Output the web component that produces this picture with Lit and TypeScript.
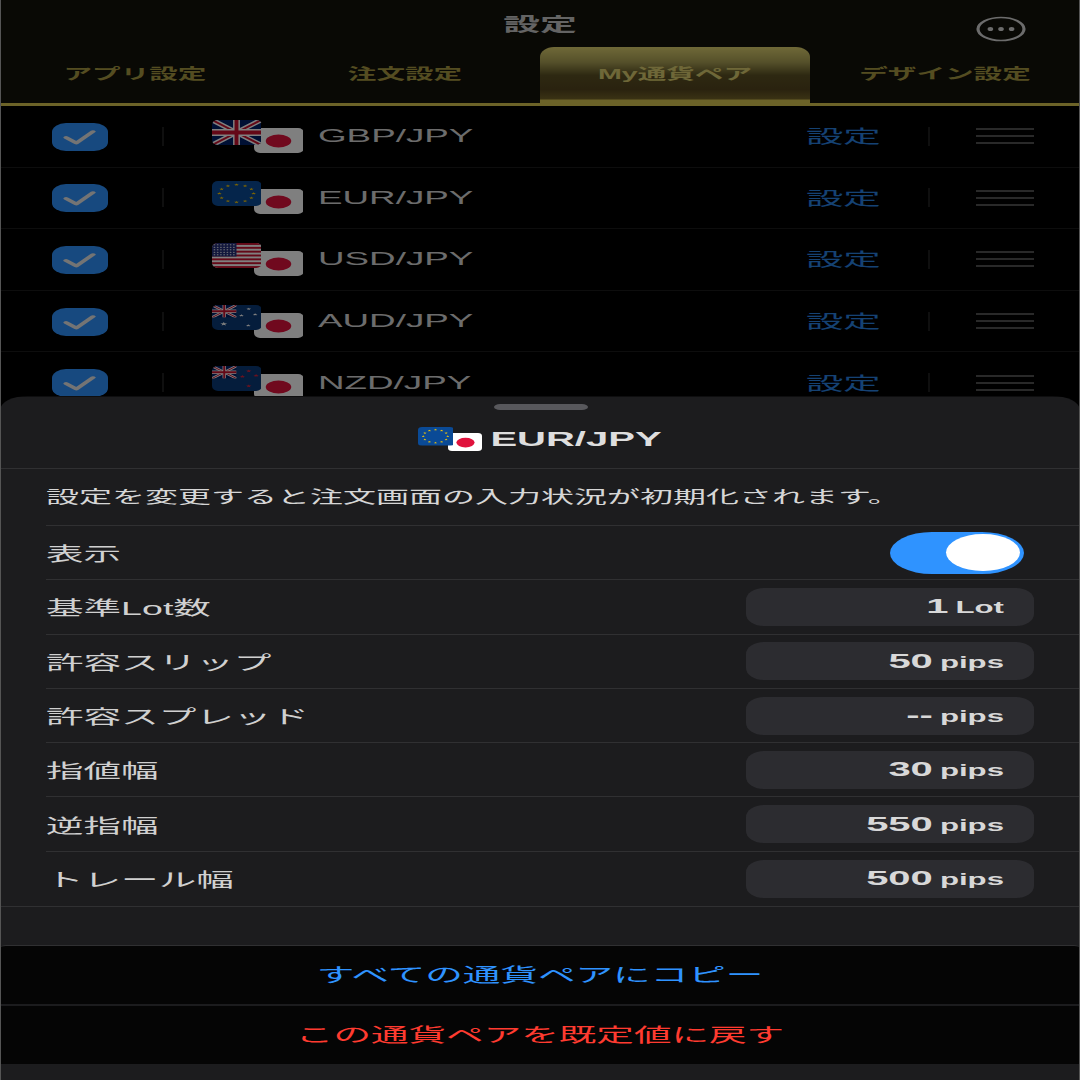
import { LitElement, html, css, svg } from "lit";
import { customElement } from "lit/decorators.js";

const star = (cx: number, cy: number, r: number, fill: string) => {
  const pts: string[] = [];
  for (let i = 0; i < 10; i++) {
    const rad = i % 2 ? r * 0.42 : r;
    const a = -Math.PI / 2 + (i * Math.PI) / 5;
    pts.push(`${(cx + Math.cos(a) * rad * 2).toFixed(1)},${(cy + Math.sin(a) * rad).toFixed(1)}`);
  }
  return svg`<polygon points=${pts.join(" ")} fill=${fill}></polygon>`;
};

const union = (w: number, h: number) => svg`
  <rect width=${w} height=${h} fill="#012169"></rect>
  <path d="M0 0L${w} ${h}M${w} 0L0 ${h}" stroke="#fff" stroke-width=${h * 0.2}></path>
  <path d="M0 0L${w} ${h}M${w} 0L0 ${h}" stroke="#c8102e" stroke-width=${h * 0.08}></path>
  <path d="M${w / 2} 0V${h}M0 ${h / 2}H${w}" stroke="#fff" stroke-width=${h * 0.28}></path>
  <path d="M${w / 2} 0V${h}M0 ${h / 2}H${w}" stroke="#c8102e" stroke-width=${h * 0.16}></path>`;

const flagArt: Record<string, unknown> = {
  GBP: union(100, 50),
  EUR: svg`<rect width="100" height="50" fill="#0a4a96"></rect>
    ${Array.from({ length: 12 }, (_, i) => {
      const a = (i * Math.PI) / 6;
      return star(50 + Math.sin(a) * 35, 25 - Math.cos(a) * 17.5, 2.6, "#ffcc00");
    })}`,
  USD: svg`<rect width="100" height="50" fill="#fff"></rect>
    ${Array.from({ length: 7 }, (_, i) => svg`<rect y=${(i * 50) / 6.5} width="100" height=${50 / 13} fill="#c8102e"></rect>`)}
    <rect width="50" height="27" fill="#27317a"></rect>
    ${Array.from({ length: 5 }, (_, r) =>
      Array.from({ length: 7 }, (_, c) => svg`<ellipse cx=${5 + c * 6.6} cy=${3.5 + r * 5} rx="1.8" ry="1" fill="#fff"></ellipse>`)
    )}`,
  AUD: svg`<rect width="100" height="50" fill="#0a3a78"></rect>
    <svg width="50" height="25" viewBox="0 0 100 50">${union(100, 50)}</svg>
    ${star(24, 38, 3.8, "#fff")}${star(75, 8, 2.6, "#fff")}${star(60, 21, 2.6, "#fff")}${star(88, 19, 2.6, "#fff")}${star(74, 41, 2.6, "#fff")}`,
  NZD: svg`<rect width="100" height="50" fill="#0a3a78"></rect>
    <svg width="50" height="25" viewBox="0 0 100 50">${union(100, 50)}</svg>
    ${star(75, 10, 3, "#d8233c")}${star(62, 21, 3, "#d8233c")}${star(90, 19, 3, "#d8233c")}${star(75, 40, 3, "#d8233c")}`,
  JPY: svg`<rect width="100" height="50" fill="#fff"></rect><ellipse cx="50" cy="26" rx="26" ry="13" fill="#e0123c"></ellipse>`,
};

const flag = (code: string, cls: string) => html`<svg class=${cls} viewBox="0 0 100 50" preserveAspectRatio="none">${flagArt[code]}</svg>`;

const tabs = ["アプリ設定", "注文設定", "My通貨ペア", "デザイン設定"];
const pairs = ["GBP", "EUR", "USD", "AUD", "NZD"];
const fields: [string, string, string][] = [
  ["基準Lot数", "1", "Lot"],
  ["許容スリップ", "50", "pips"],
  ["許容スプレッド", "--", "pips"],
  ["指値幅", "30", "pips"],
  ["逆指幅", "550", "pips"],
  ["トレール幅", "500", "pips"],
];

@customElement("app-root")
export class AppRoot extends LitElement {
  static styles = css`
    :host {
      display: block;
      position: relative;
      width: 1080px;
      height: 1080px;
      overflow: hidden;
      background: #000;
      font-family: "Liberation Sans", "Noto Sans CJK JP", sans-serif;
    }
    :host::after {
      content: "";
      position: absolute;
      inset: 0;
      border-left: 1px solid #555;
      border-right: 1px solid #555;
      pointer-events: none;
    }
    .canvas {
      width: 540px;
      height: 1080px;
      transform: scaleX(2);
      transform-origin: 0 0;
      display: flex;
      flex-direction: column;
      color: #d2d2d2;
    }
    .top {
      position: relative;
      height: 397px;
      flex: none;
      overflow: hidden;
      background: #000;
      color: #d8d8d8;
    }
    .dim {
      position: absolute;
      inset: 0;
      z-index: 2;
      background: rgba(0, 0, 0, 0.5);
    }
    .head {
      height: 47px;
      display: grid;
      grid-template-columns: 1fr auto 1fr;
      background: #12120a;
    }
    .title {
      grid-column: 2;
      font-size: 18.4px;
      font-weight: 700;
      line-height: 50px;
      color: #c8c8c8;
    }
    .more {
      justify-self: end;
      width: 25px;
      height: 26px;
      margin: 16px 27px 0 0;
    }
    .tabs {
      height: 59px;
      display: flex;
      box-sizing: border-box;
      background: #12120a;
      border-bottom: 3px solid #d9c750;
    }
    .tab {
      width: 135px;
      height: 56px;
      display: flex;
      justify-content: center;
      padding-top: 17px;
      box-sizing: border-box;
      font-size: 14.3px;
      line-height: 20px;
      font-weight: 700;
      color: #a99a43;
    }
    .tab.on {
      height: 59px;
      border-radius: 7px 7px 0 0 / 10px 10px 0 0;
      color: #dccf70;
      background: linear-gradient(
        #dfd270 0,
        #aaa054 26%,
        #5c5124 48%,
        #54451e 72%,
        #746428 88%,
        #d6c450 90%,
        #d6c450 100%
      );
    }
    .row {
      height: 61.6px;
      box-sizing: border-box;
      display: flex;
      align-items: center;
      border-bottom: 1px solid #1b1b1b;
    }
    .checkcell {
      width: 80.5px;
      padding-left: 26px;
      box-sizing: border-box;
      display: flex;
    }
    .check {
      width: 28px;
      height: 28px;
      border-radius: 7px 7px / 9px 9px;
      background: #2f93ff;
      margin-top: 1px;
    }
    .vline {
      width: 1px;
      height: 19px;
      background: #3e3e3e;
      transform: scaleX(0.5);
    }
    .pair {
      flex: 1;
      display: flex;
      align-items: center;
      gap: 7px;
      padding-left: 24.5px;
      font-size: 18.4px;
    }
    .flags {
      position: relative;
      width: 46px;
      height: 33px;
    }
    .f1,
    .f2 {
      position: absolute;
      width: 24.5px;
      height: 25px;
      border-radius: 3px / 5px;
    }
    .f1 {
      left: 0;
      top: 0;
      z-index: 1;
    }
    .f2 {
      left: 21px;
      top: 8px;
    }
    .setlink {
      width: 60.5px;
      padding-bottom: 3px;
      font-size: 18.7px;
      color: #2a85e6;
    }
    .menu {
      width: 29px;
      height: 16px;
      margin: 0 23px 0 23.5px;
      display: flex;
      flex-direction: column;
      justify-content: space-between;
    }
    .menu i {
      height: 2px;
      background: #525252;
    }
    .sheet {
      flex: 1;
      display: flex;
      flex-direction: column;
      border-radius: 14px 14px 0 0;
      background: #1c1c1e;
      position: relative;
      margin-top: -1px;
    }
    .handle {
      width: 47px;
      height: 6px;
      margin: 8px auto 0;
      border-radius: 3px;
      background: #58585c;
    }
    .sheet-title {
      height: 59px;
      flex: none;
      box-sizing: border-box;
      display: flex;
      justify-content: center;
      align-items: center;
      gap: 3.5px;
      padding: 1px 0 0;
      border-bottom: 1px solid #303032;
      font-size: 20px;
      font-weight: 700;
      color: #dedede;
    }
    .mini {
      position: relative;
      width: 32.5px;
      height: 25px;
    }
    .mini .f1,
    .mini .f2 {
      width: 17.5px;
      height: 18.5px;
      border-radius: 2px / 3px;
    }
    .mini .f2 {
      left: 14.5px;
      top: 5.5px;
    }
    .notice {
      height: 57px;
      flex: none;
      margin-left: 23px;
      box-sizing: border-box;
      border-bottom: 1px solid #303032;
      font-size: 16.5px;
      line-height: 56px;
      white-space: nowrap;
      color: #d6d6d6;
    }
    .field {
      height: 54.3px;
      flex: none;
      box-sizing: border-box;
      margin-left: 23px;
      padding-right: 23px;
      display: flex;
      align-items: center;
      justify-content: space-between;
      border-bottom: 1px solid #303032;
      font-size: 18.8px;
      color: #d0d0d0;
    }
    .field.last {
      border-bottom: none;
    }
    .switch {
      width: 67px;
      height: 42px;
      margin-right: 5.5px;
      border-radius: 21px;
      background: #2f93ff;
      display: flex;
      align-items: center;
      justify-content: flex-end;
      padding-right: 2px;
      box-sizing: border-box;
    }
    .knob {
      width: 36.5px;
      height: 37px;
      border-radius: 50%;
      background: #fff;
    }
    .pill {
      width: 144px;
      height: 38px;
      border-radius: 9px / 12px;
      background: #2c2c30;
      box-sizing: border-box;
      padding-right: 15px;
      display: flex;
      align-items: center;
      justify-content: flex-end;
      gap: 3.5px;
      color: #d8d8d8;
    }
    .num {
      font-size: 20px;
      font-weight: 700;
    }
    .unit {
      font-size: 15.6px;
      font-weight: 700;
      padding-top: 3px;
    }
    .spacer {
      height: 39px;
      flex: none;
      border-top: 1px solid #303032;
      box-sizing: border-box;
    }
    .btn {
      height: 59px;
      flex: none;
      box-sizing: border-box;
      padding-bottom: 4px;
      display: flex;
      align-items: center;
      justify-content: center;
      background: #050505;
      font-size: 18.8px;
    }
    .btn.a {
      color: #2f93ff;
      border-radius: 3px 3px 0 0;
      border-top: 1px solid #303032;
      margin-bottom: 2px;
    }
    .btn.b {
      color: #ff3b30;
      height: 58px;
    }
  `;

  render() {
    return html`<div class="canvas">
      <div class="top">
        <div class="head">
          <div class="title">設定</div>
          <svg class="more" viewBox="0 0 25 26" fill="none">
            <circle cx="12.5" cy="13" r="11.5" stroke="#d8d8d8" stroke-width="1.6"></circle>
            <ellipse cx="7.2" cy="13" rx="1.4" ry="2" fill="#d8d8d8"></ellipse>
            <ellipse cx="12.5" cy="13" rx="1.4" ry="2" fill="#d8d8d8"></ellipse>
            <ellipse cx="17.8" cy="13" rx="1.4" ry="2" fill="#d8d8d8"></ellipse>
          </svg>
        </div>
        <div class="tabs">
          ${tabs.map((t, i) => html`<div class="tab ${i === 2 ? "on" : ""}">${t}</div>`)}
        </div>
        ${pairs.map(
          (p) => html`<div class="row">
            <div class="checkcell">
              <svg class="check" viewBox="0 0 28 28" fill="none">
                <path d="M7 14.5L12.2 20L20.5 8.5" stroke="#e8e8e8" stroke-width="2.6" stroke-linecap="round" stroke-linejoin="round"></path>
              </svg>
            </div>
            <div class="vline"></div>
            <div class="pair">
              <div class="flags">${flag(p, "f1")}${flag("JPY", "f2")}</div>
              ${p}/JPY
            </div>
            <div class="setlink">設定</div>
            <div class="vline"></div>
            <div class="menu"><i></i><i></i><i></i></div>
          </div>`
        )}
        <div class="dim"></div>
      </div>
      <div class="sheet">
        <div class="handle"></div>
        <div class="sheet-title">
          <div class="mini">${flag("EUR", "f1")}${flag("JPY", "f2")}</div>
          <span>EUR/JPY</span>
        </div>
        <div class="notice">設定を変更すると注文画面の入力状況が初期化されます。</div>
        <div class="field">
          <span>表示</span>
          <div class="switch"><div class="knob"></div></div>
        </div>
        ${fields.map(
          ([label, num, unit], i) => html`<div class="field ${i === fields.length - 1 ? "last" : ""}">
            <span>${label}</span>
            <div class="pill"><span class="num">${num}</span><span class="unit">${unit}</span></div>
          </div>`
        )}
        <div class="spacer"></div>
        <div class="btn a">すべての通貨ペアにコピー</div>
        <div class="btn b">この通貨ペアを既定値に戻す</div>
      </div>
    </div>`;
  }
}
